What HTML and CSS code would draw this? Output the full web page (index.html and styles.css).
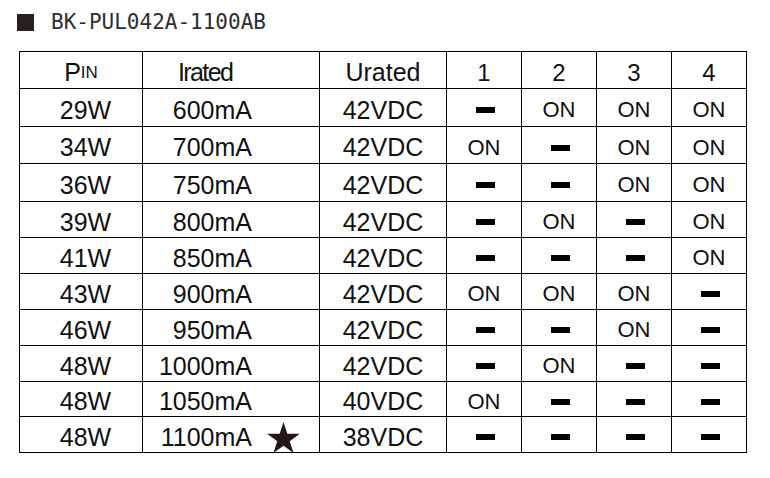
FILE: index.html
```html
<!DOCTYPE html>
<html>
<head>
<meta charset="utf-8">
<link rel="stylesheet" href="styles.css">
</head>
<body>
<div class="page">
  <div class="title"><span class="bullet"></span><span class="model">BK-PUL042A-1100AB</span></div>
  <div class="grid">
    <div class="c pin hd"><span class="p">P</span><span class="in">IN</span></div>
    <div class="c ir hd"><span class="irated">Irated</span></div>
    <div class="c ur hd">Urated</div>
    <div class="c sw hd num">1</div>
    <div class="c sw hd num">2</div>
    <div class="c sw hd num">3</div>
    <div class="c sw hd num">4</div>

    <div class="c pin">29W</div><div class="c ma">600mA</div><div class="c ur">42VDC</div>
    <div class="c sw"><i class="off"></i></div><div class="c sw on">ON</div><div class="c sw on">ON</div><div class="c sw on">ON</div>

    <div class="c pin">34W</div><div class="c ma">700mA</div><div class="c ur">42VDC</div>
    <div class="c sw on">ON</div><div class="c sw"><i class="off"></i></div><div class="c sw on">ON</div><div class="c sw on">ON</div>

    <div class="c pin">36W</div><div class="c ma">750mA</div><div class="c ur">42VDC</div>
    <div class="c sw"><i class="off"></i></div><div class="c sw"><i class="off"></i></div><div class="c sw on">ON</div><div class="c sw on">ON</div>

    <div class="c pin">39W</div><div class="c ma">800mA</div><div class="c ur">42VDC</div>
    <div class="c sw"><i class="off"></i></div><div class="c sw on">ON</div><div class="c sw"><i class="off"></i></div><div class="c sw on">ON</div>

    <div class="c pin">41W</div><div class="c ma">850mA</div><div class="c ur">42VDC</div>
    <div class="c sw"><i class="off"></i></div><div class="c sw"><i class="off"></i></div><div class="c sw"><i class="off"></i></div><div class="c sw on">ON</div>

    <div class="c pin">43W</div><div class="c ma">900mA</div><div class="c ur">42VDC</div>
    <div class="c sw on">ON</div><div class="c sw on">ON</div><div class="c sw on">ON</div><div class="c sw"><i class="off"></i></div>

    <div class="c pin">46W</div><div class="c ma">950mA</div><div class="c ur">42VDC</div>
    <div class="c sw"><i class="off"></i></div><div class="c sw"><i class="off"></i></div><div class="c sw on">ON</div><div class="c sw"><i class="off"></i></div>

    <div class="c pin">48W</div><div class="c ma">1000mA</div><div class="c ur">42VDC</div>
    <div class="c sw"><i class="off"></i></div><div class="c sw on">ON</div><div class="c sw"><i class="off"></i></div><div class="c sw"><i class="off"></i></div>

    <div class="c pin">48W</div><div class="c ma">1050mA</div><div class="c ur">40VDC</div>
    <div class="c sw on">ON</div><div class="c sw"><i class="off"></i></div><div class="c sw"><i class="off"></i></div><div class="c sw"><i class="off"></i></div>

    <div class="c pin">48W</div>
    <div class="c ma">1100mA<svg class="star" viewBox="0 0 100 95" width="33" height="31"><polygon points="50,0 61.8,36.3 100,36.3 69.1,58.8 80.9,95 50,72.6 19.1,95 30.9,58.8 0,36.3 38.2,36.3"/></svg></div>
    <div class="c ur">38VDC</div>
    <div class="c sw"><i class="off"></i></div><div class="c sw"><i class="off"></i></div><div class="c sw"><i class="off"></i></div><div class="c sw"><i class="off"></i></div>
  </div>
</div>
</body>
</html>
```

FILE: styles.css
```css
* { box-sizing: border-box; }
html, body { margin: 0; padding: 0; background: #fff; }
body { width: 770px; height: 478px; overflow: hidden; }

.page {
  padding: 14px 0 0 17px;
}

.title {
  display: flex;
  align-items: center;
  height: 17px;
  margin-bottom: 20px;
}
.bullet {
  width: 17px;
  height: 17px;
  background: #2a201d;
  margin-right: 17px;
}
.model {
  font-family: "DejaVu Sans Mono", monospace;
  font-size: 21px;
  color: #2e2e2e;
  line-height: 17px;
}

.grid {
  margin-left: 2px;
  display: grid;
  grid-template-columns: 123px 177px 127px 75px 75px 75px 75px;
  grid-template-rows: 37px 38px 37px 38px 36px 36px 36px 36px 36px 35px 36px;
  border-left: 1px solid #000;
  border-top: 1px solid #000;
  width: 728px;
  font-family: "Liberation Sans", Arial, sans-serif;
  color: #111;
}

.c {
  border-right: 1px solid #000;
  border-bottom: 1px solid #000;
  display: flex;
  align-items: center;
  justify-content: center;
  padding-top: 5px;
  font-size: 25px;
  line-height: 1.15;
  position: relative;
}

.pin { padding-left: 9px; }
.pin.hd { padding-left: 0; }
.pin .p { font-size: 25px; }
.pin .in { font-size: 17px; }

.ir.hd { justify-content: flex-start; padding-left: 35px; }
.irated { letter-spacing: -1.6px; }

.ma {
  justify-content: flex-end;
  padding-right: 67px;
}

.num { font-size: 24px; }

.on { font-size: 22px; }

.off {
  display: block;
  width: 19px;
  height: 6px;
  background: #000;
  margin-left: 3px;
}

.star {
  position: absolute;
  left: 124px;
  top: 5px;
  fill: #231815;
}
```
